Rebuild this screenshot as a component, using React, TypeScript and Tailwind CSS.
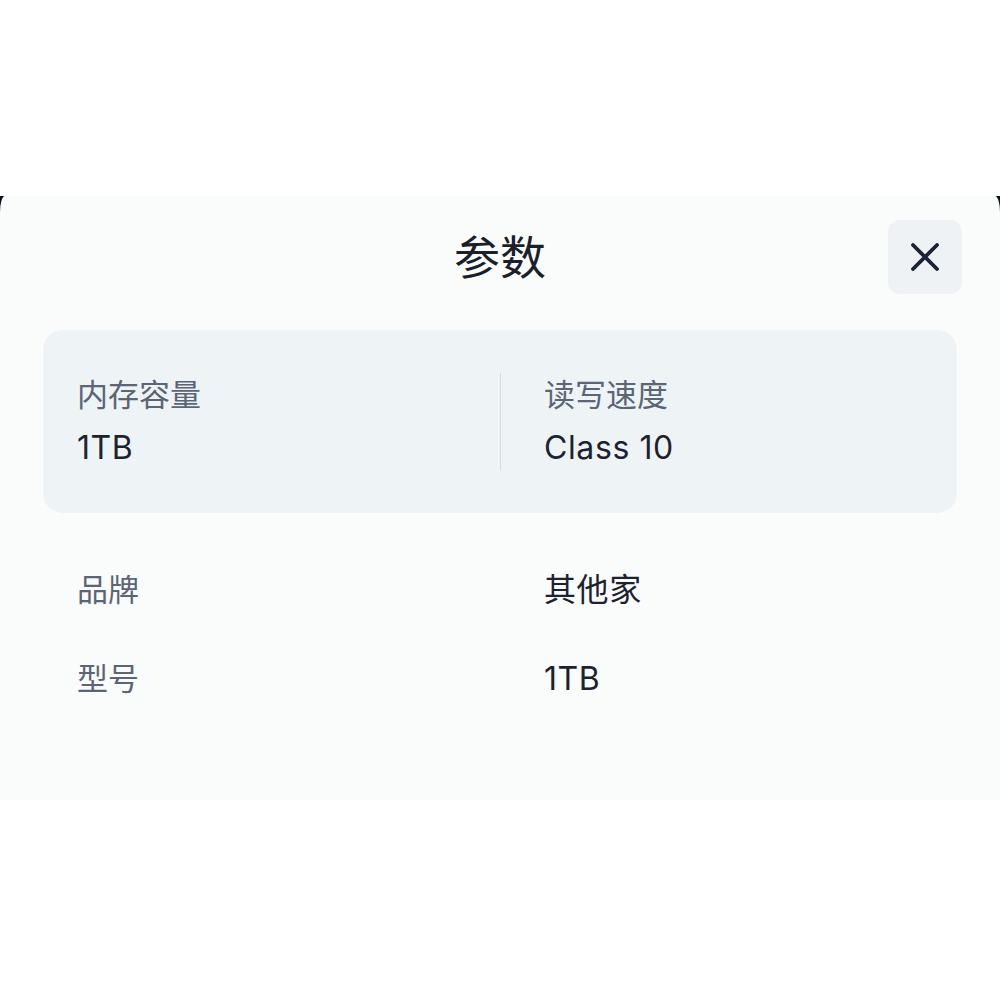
const FONT = "font-['Inter','Noto_Sans_CJK_SC',sans-serif]";

type Spec = { label: string; value: string };

const highlight: Spec[] = [
  { label: '内存容量', value: '1TB' },
  { label: '读写速度', value: 'Class 10' },
];

const rows: Spec[] = [
  { label: '品牌', value: '其他家' },
  { label: '型号', value: '1TB' },
];

function CloseButton() {
  return (
    <button className="flex h-[74px] w-[74px] items-center justify-center rounded-[12px] bg-[#eef2f5]">
      <svg width="28" height="28" viewBox="0 0 28 28" fill="none" stroke="#1b2233" strokeWidth={3.8} strokeLinecap="round">
        <path d="M2 2L26 26M26 2L2 26" />
      </svg>
    </button>
  );
}

export default function App() {
  return (
    <div className={`flex h-[1000px] w-[1000px] flex-col bg-white ${FONT}`}>
      <div className="h-[196px] shrink-0" />

      {/* sheet over dark backdrop */}
      <div className="h-[604px] shrink-0 bg-[#0d1420]">
        <div className="flex h-full flex-col rounded-tl-[5px_16px] rounded-tr-[5px_16px] bg-[#fafbfb] px-[43px] pt-[24px]">
          {/* Header */}
          <div className="relative flex h-[74px] items-center justify-center">
            <h1 className="text-[46px] leading-none font-normal text-[#1a1f2b]">参数</h1>
            <div className="absolute right-[-5px] top-0">
              <CloseButton />
            </div>
          </div>

          {/* Highlight card */}
          <div className="mt-[36px] flex h-[183px] items-center rounded-[20px] bg-[#eef4f6]">
            {highlight.map((s, i) => (
              <div key={s.label} className="flex flex-1 items-center self-stretch">
                {i > 0 && <div className="h-[97px] w-px bg-[#d5dce1]" />}
                <div className={i === 0 ? 'pl-[34px]' : 'pl-[43px]'}>
                  <div className="text-[31px] leading-[40px] text-[#5b6576]">{s.label}</div>
                  <div className="mt-[13px] text-[32px] leading-[40px] tracking-[0.6px] text-[#1c2230]">{s.value}</div>
                </div>
              </div>
            ))}
          </div>

          {/* Plain rows */}
          <div className="mt-[57px] flex flex-col gap-[49px]">
            {rows.map((s) => (
              <div key={s.label} className="flex text-[31px] leading-[40px]">
                <div className="w-[457px] pl-[34px] text-[#5b6576]">{s.label}</div>
                <div className="pl-[44px] text-[32px] tracking-[0.6px] text-[#1c2230]">{s.value}</div>
              </div>
            ))}
          </div>
        </div>
      </div>

      <div className="flex-1 bg-white" />
    </div>
  );
}
